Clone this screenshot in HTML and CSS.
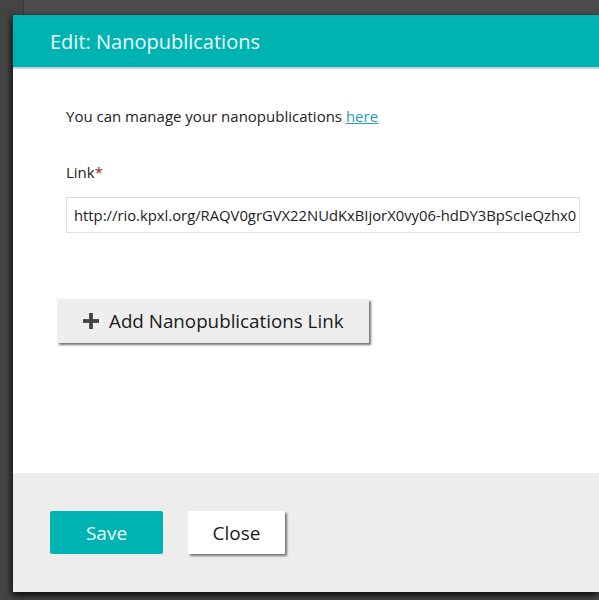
FILE: index.html
```html
<!DOCTYPE html>
<html>
<head>
<meta charset="utf-8">
<link rel="stylesheet" href="styles.css">
</head>
<body>
<div class="page">
  <div class="strip"></div>
  <div class="modal">
    <div class="modal-header">
      <h2 class="modal-title">Edit: Nanopublications</h2>
    </div>
    <div class="modal-body">
      <p class="intro">You can manage your nanopublications <a href="#" class="link">here</a></p>
      <label class="field-label">Link<span class="req">*</span></label>
      <div class="input">http://rio.kpxl.org/RAQV0grGVX22NUdKxBIjorX0vy06-hdDY3BpScIeQzhx0</div>
      <button class="add-btn">
        <svg class="plus" width="18" height="18" viewBox="0 0 18 18"><rect x="7.1" y="1" width="3.8" height="16" fill="#444"/><rect x="1" y="7.1" width="16" height="3.8" fill="#444"/></svg>
        <span>Add Nanopublications Link</span>
      </button>
    </div>
    <div class="modal-footer">
      <button class="btn btn-save">Save</button>
      <button class="btn btn-close">Close</button>
    </div>
  </div>
</div>
</body>
</html>
```
FILE: styles.css
```css
html, body {
  margin: 0;
  padding: 0;
  width: 599px;
  height: 600px;
  overflow: hidden;
  background: #4c4c4c;
  font-family: "Open Sans", sans-serif;
}
.page {
  position: relative;
  width: 599px;
  height: 600px;
  padding: 15px 0 0 13px;
  box-sizing: border-box;
  overflow: hidden;
}
.strip {
  position: absolute;
  left: 0;
  top: 0;
  width: 23px;
  height: 600px;
  background: #444;
  border-right: 1px solid #3c3c3c;
}
.modal {
  position: relative;
  width: 586px;
  height: 577px;
  background: #fff;
  display: flex;
  flex-direction: column;
  box-shadow: 0 4px 8px rgba(0,0,0,0.7), -2px 2px 6px rgba(0,0,0,0.4);
}
.modal-header {
  height: 52px;
  background: #00b3b3;
  border-bottom: 2px solid #d0d0d0;
  box-sizing: content-box;
  display: flex;
  align-items: center;
  padding-left: 37px;
}
.modal-title {
  margin: 0;
  font-weight: 400;
  font-size: 20px;
  color: #eefafa;
}
.modal-body {
  flex: 1;
  padding: 35px 0 0 53px;
}
.intro {
  margin: 0;
  font-size: 15px;
  color: #222;
  line-height: 24px;
}
.link {
  color: #2a9bc4;
  text-decoration: underline;
}
.field-label {
  display: block;
  margin-top: 32px;
  font-size: 15px;
  color: #222;
  line-height: 24px;
}
.req {
  color: #a01a1a;
}
.input {
  margin-top: 13px;
  width: 514px;
  height: 36px;
  box-sizing: border-box;
  border: 1px solid #e0dfd8;
  padding: 0 7px;
  font-size: 14.8px;
  line-height: 34px;
  color: #222;
  white-space: nowrap;
  overflow: hidden;
}
.add-btn {
  margin: 66px 0 0 -9px;
  width: 312px;
  height: 44px;
  border: none;
  background: #eeeeee;
  box-shadow: 2px 2px 2px rgba(0,0,0,0.55);
  display: flex;
  align-items: center;
  padding: 0 0 0 25px;
  font-family: "Open Sans", sans-serif;
  font-size: 18.8px;
  color: #1a1a1a;
  cursor: pointer;
}
.plus {
  margin-right: 9px;
}
.modal-footer {
  height: 119px;
  background: #ededed;
  display: flex;
  align-items: flex-start;
  padding: 38px 0 0 37px;
  box-sizing: border-box;
  gap: 25px;
}
.btn {
  height: 43px;
  border: none;
  font-family: "Open Sans", sans-serif;
  font-size: 19px;
  cursor: pointer;
}
.btn-save {
  width: 113px;
  background: #00b3b3;
  color: #f2fbfb;
  border-radius: 2px;
}
.btn-close {
  width: 97px;
  background: #fff;
  color: #1a1a1a;
  box-shadow: 2px 2px 2px rgba(0,0,0,0.5);
}
```
